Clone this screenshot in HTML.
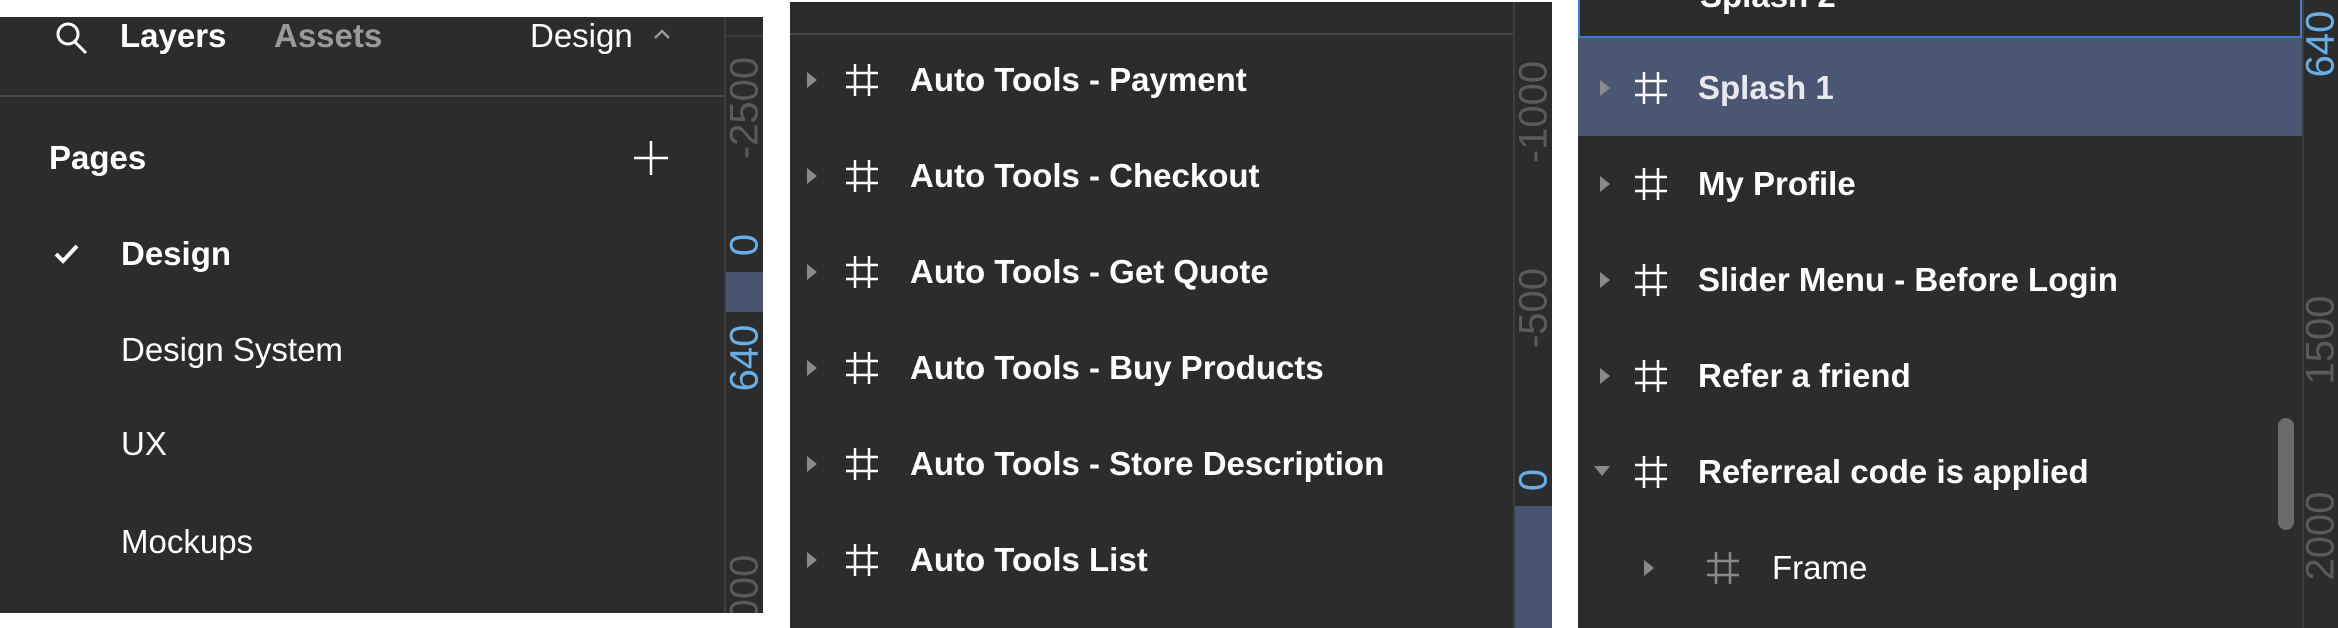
<!DOCTYPE html>
<html><head><meta charset="utf-8">
<style>
*{margin:0;padding:0;box-sizing:border-box}
body{width:2338px;height:628px;background:#fff;position:relative;overflow:hidden;font-family:"Liberation Sans",sans-serif;color:#fff}
.p{position:absolute;background:#2c2c2c;overflow:hidden}
.t{position:absolute;white-space:nowrap;font-size:33px;line-height:38px;transform:translateY(-50%)}
.b{font-weight:bold}
.ruler{position:absolute;top:0;bottom:0;background:#2c2c2c;border-left:2px solid #3d3d3d}
.rt{position:absolute;left:50%;white-space:nowrap;font-size:40px;color:#5a5a5a;transform:translate(-50%,-50%) rotate(-90deg)}
.blue{color:#6aaee8}
.tri{position:absolute;width:0;height:0;border-top:8px solid transparent;border-bottom:8px solid transparent;border-left:10px solid #8a8a8a;transform:translateY(-50%)}
.hash{position:absolute;transform:translateY(-50%)}
</style></head><body>

<!-- Panel 1 -->
<div class="p" style="left:0;top:17px;width:763px;height:596px">
  <svg style="position:absolute;left:54px;top:4px" width="36" height="36" viewBox="0 0 36 36"><circle cx="14" cy="13" r="10" fill="none" stroke="#fff" stroke-width="3"/><line x1="21" y1="21" x2="32" y2="32" stroke="#fff" stroke-width="3"/></svg>
  <div class="t b" style="left:120px;top:19px">Layers</div>
  <div class="t b" style="left:274px;top:19px;color:#9a9a9a">Assets</div>
  <div class="t" style="left:530px;top:19px">Design</div>
  <svg style="position:absolute;left:652px;top:10px" width="20" height="14" viewBox="0 0 20 14"><path d="M3 11 L10 4 L17 11" fill="none" stroke="#999" stroke-width="2.5"/></svg>
  <div style="position:absolute;left:0;top:78px;width:725px;height:2px;background:#454545"></div>
  <div class="t b" style="left:49px;top:141px">Pages</div>
  <svg style="position:absolute;left:634px;top:124px" width="34" height="34" viewBox="0 0 34 34"><path d="M17 0V34M0 17H34" stroke="#fff" stroke-width="2.5"/></svg>
  <svg style="position:absolute;left:54px;top:226px" width="26" height="22" viewBox="0 0 26 22"><path d="M2 11 L9 18 L23 3" fill="none" stroke="#fff" stroke-width="4"/></svg>
  <div class="t b" style="left:121px;top:237px">Design</div>
  <div class="t" style="left:121px;top:333px">Design System</div>
  <div class="t" style="left:121px;top:427px">UX</div>
  <div class="t" style="left:121px;top:525px">Mockups</div>
  <div class="ruler" style="left:724px;width:39px">
    <div style="position:absolute;left:0;right:0;top:18px;height:2px;background:#3d3d3d"></div>
    <div class="rt" style="top:91px">-2500</div>
    <div class="rt blue" style="top:228px">0</div>
    <div style="position:absolute;left:0;right:0;top:255px;height:40px;background:#4a5470"></div>
    <div class="rt blue" style="top:341px">640</div>
    <div class="rt" style="top:571px">000</div>
  </div>
</div>

<!-- Panel 2 -->
<div class="p" style="left:790px;top:2px;width:762px;height:626px">
  <div style="position:absolute;left:0;top:31px;width:724px;height:2px;background:#454545"></div>
  <div class="tri" style="left:17px;top:78px"></div>
  <div class="tri" style="left:17px;top:174px"></div>
  <div class="tri" style="left:17px;top:270px"></div>
  <div class="tri" style="left:17px;top:366px"></div>
  <div class="tri" style="left:17px;top:462px"></div>
  <div class="tri" style="left:17px;top:558px"></div>
  <svg class="hash" style="left:55px;top:78px" width="34" height="34" viewBox="0 0 34 34"><path d="M10 1V33M24 1V33M1 10H33M1 24H33" stroke="#fff" stroke-width="2.5"/></svg>
  <svg class="hash" style="left:55px;top:174px" width="34" height="34" viewBox="0 0 34 34"><path d="M10 1V33M24 1V33M1 10H33M1 24H33" stroke="#fff" stroke-width="2.5"/></svg>
  <svg class="hash" style="left:55px;top:270px" width="34" height="34" viewBox="0 0 34 34"><path d="M10 1V33M24 1V33M1 10H33M1 24H33" stroke="#fff" stroke-width="2.5"/></svg>
  <svg class="hash" style="left:55px;top:366px" width="34" height="34" viewBox="0 0 34 34"><path d="M10 1V33M24 1V33M1 10H33M1 24H33" stroke="#fff" stroke-width="2.5"/></svg>
  <svg class="hash" style="left:55px;top:462px" width="34" height="34" viewBox="0 0 34 34"><path d="M10 1V33M24 1V33M1 10H33M1 24H33" stroke="#fff" stroke-width="2.5"/></svg>
  <svg class="hash" style="left:55px;top:558px" width="34" height="34" viewBox="0 0 34 34"><path d="M10 1V33M24 1V33M1 10H33M1 24H33" stroke="#fff" stroke-width="2.5"/></svg>
  <div class="t b" style="left:120px;top:78px">Auto Tools - Payment</div>
  <div class="t b" style="left:120px;top:174px">Auto Tools - Checkout</div>
  <div class="t b" style="left:120px;top:270px">Auto Tools - Get Quote</div>
  <div class="t b" style="left:120px;top:366px">Auto Tools - Buy Products</div>
  <div class="t b" style="left:120px;top:462px">Auto Tools - Store Description</div>
  <div class="t b" style="left:120px;top:558px">Auto Tools List</div>
  <div class="ruler" style="left:723px;width:39px">
    <div class="rt" style="top:110px">-1000</div>
    <div class="rt" style="top:306px">-500</div>
    <div class="rt blue" style="top:478px">0</div>
    <div style="position:absolute;left:0;right:0;top:504px;bottom:0;background:#4a5470"></div>
  </div>
</div>

<!-- Panel 3 -->
<div class="p" style="left:1578px;top:0;width:760px;height:628px">
  <div style="position:absolute;left:0;top:0;width:724px;height:38px;border:2px solid #3a7bd5;border-top:none"></div>
  <div class="t b" style="left:122px;top:-4px">Splash 2</div>
  <div style="position:absolute;left:0;top:38px;width:724px;height:98px;background:#4b5672"></div>
  <div class="tri" style="left:22px;top:88px"></div>
  <div class="tri" style="left:22px;top:184px"></div>
  <div class="tri" style="left:22px;top:280px"></div>
  <div class="tri" style="left:22px;top:376px"></div>
  <div style="position:absolute;left:16px;top:466px;width:0;height:0;border-left:8px solid transparent;border-right:8px solid transparent;border-top:10px solid #8a8a8a"></div>
  <div class="tri" style="left:66px;top:568px"></div>
  <svg class="hash" style="left:56px;top:88px" width="34" height="34" viewBox="0 0 34 34"><path d="M10 1V33M24 1V33M1 10H33M1 24H33" stroke="#fff" stroke-width="2.5"/></svg>
  <svg class="hash" style="left:56px;top:184px" width="34" height="34" viewBox="0 0 34 34"><path d="M10 1V33M24 1V33M1 10H33M1 24H33" stroke="#fff" stroke-width="2.5"/></svg>
  <svg class="hash" style="left:56px;top:280px" width="34" height="34" viewBox="0 0 34 34"><path d="M10 1V33M24 1V33M1 10H33M1 24H33" stroke="#fff" stroke-width="2.5"/></svg>
  <svg class="hash" style="left:56px;top:376px" width="34" height="34" viewBox="0 0 34 34"><path d="M10 1V33M24 1V33M1 10H33M1 24H33" stroke="#fff" stroke-width="2.5"/></svg>
  <svg class="hash" style="left:56px;top:472px" width="34" height="34" viewBox="0 0 34 34"><path d="M10 1V33M24 1V33M1 10H33M1 24H33" stroke="#fff" stroke-width="2.5"/></svg>
  <svg class="hash" style="left:128px;top:568px" width="34" height="34" viewBox="0 0 34 34"><path d="M10 1V33M24 1V33M1 10H33M1 24H33" stroke="#8a8a8a" stroke-width="2.5"/></svg>
  <div class="t b" style="left:120px;top:88px;color:#e8e8ee">Splash 1</div>
  <div class="t b" style="left:120px;top:184px">My Profile</div>
  <div class="t b" style="left:120px;top:280px">Slider Menu - Before Login</div>
  <div class="t b" style="left:120px;top:376px">Refer a friend</div>
  <div class="t b" style="left:120px;top:472px">Referreal code is applied</div>
  <div class="t" style="left:194px;top:568px">Frame</div>
  <div style="position:absolute;left:700px;top:418px;width:16px;height:112px;border-radius:8px;background:#6b6b6b"></div>
  <div class="ruler" style="left:724px;width:36px">
    <div class="rt blue" style="top:44px">640</div>
    <div class="rt" style="top:340px">1500</div>
    <div class="rt" style="top:536px">2000</div>
  </div>
</div>
</body></html>
